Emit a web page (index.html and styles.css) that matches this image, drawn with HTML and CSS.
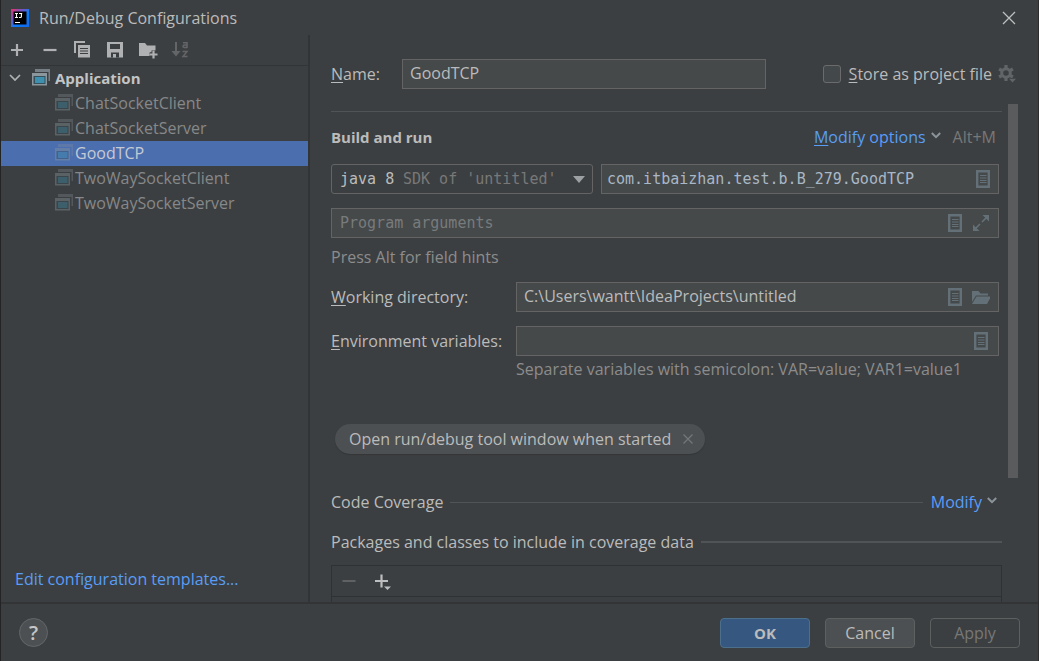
FILE: index.html
```html
<!DOCTYPE html>
<html lang="en">
<head>
<meta charset="utf-8">
<title>Run/Debug Configurations</title>
<link rel="stylesheet" href="styles.css">
</head>
<body>
<svg class="defs" aria-hidden="true">
  <symbol id="app" viewBox="0 0 18 17">
    <path d="M3 0h15v12h-1.500V3H3z" fill="#8b969d" opacity=".75"/>
    <path d="M0 4h15v12.500H0z" fill="#8b969d"/>
    <path d="M1.500 7h12v8h-12z" fill="#35505b"/>
    <path d="M3 8h9.500v6H3z" fill="#3f8fae"/>
  </symbol>
  <symbol id="doc" viewBox="0 0 14 18">
    <path d="M1.200 1.200h11.600v15.600H1.200z" fill="none" stroke="currentColor" stroke-width="2.400"/>
    <path d="M4 5.500h6.500M4 8h6.500M4 10.500h6.500M4 12.500h6.500" stroke="currentColor" stroke-width="1.200"/>
  </symbol>
  <symbol id="chevron" viewBox="0 0 10 7">
    <path d="M.8 1 5 5.200 9.200 1" fill="none" stroke="#8a949a" stroke-width="2"/>
  </symbol>
</svg>
<div class="dialog">
  <header class="titlebar">
    <svg class="logo" width="18" height="18" viewBox="0 0 18 18" aria-hidden="true">
      <defs><linearGradient id="g" x1="0" y1="0" x2="1" y2="1"><stop offset="0" stop-color="#f0306a"/><stop offset=".35" stop-color="#6a57c8"/><stop offset=".6" stop-color="#087cfa"/><stop offset="1" stop-color="#1668e8"/></linearGradient></defs>
      <path d="M0 0h18v18H0z" fill="url(#g)"/><path d="M2.500 2.500h13v13h-13z"/>
      <path d="M4 4.500h3M5.500 4.500v4M4 8.500h3M8 4.500h3.200M10.400 4.500v3q0 1-1 1H8M4 13.500h5" fill="none" stroke="#fff" stroke-width="1.100"/>
    </svg>
    <h1>Run/Debug Configurations</h1>
    <button class="close" aria-label="Close"><svg width="14" height="14" viewBox="0 0 14 14"><path d="m1 1 12 12M13 1 1 13" stroke="#bdbfc0" stroke-width="1.300"/></svg></button>
  </header>
  <div class="body">
    <aside class="sidebar">
      <div class="toolbar">
        <button aria-label="Add"><svg viewBox="0 0 18 18"><path d="M9 3v12M3 9h12" stroke="#afb1b3" stroke-width="2.200"/></svg></button>
        <button aria-label="Remove"><svg viewBox="0 0 18 18"><path d="M2.500 9h13" stroke="#afb1b3" stroke-width="2.200"/></svg></button>
        <button aria-label="Copy"><svg viewBox="0 0 18 18"><path d="M0 0h11v2H2v10H0z" fill="#afb1b3"/><path d="M4 4h12v12.500H4z" fill="#afb1b3"/><path d="M6 7.500h8M6 10h8M6 12.500h8" stroke="#3c3f41" stroke-width="1.100"/></svg></button>
        <button aria-label="Save"><svg viewBox="0 0 18 18"><path d="M0 1h16v15.500H0z" fill="#afb1b3"/><path d="M3 3h10v5H3zM4 11.500h8v5H4z" fill="#3c3f41"/><path d="M6 13h3v3.500H6z" fill="#afb1b3"/></svg></button>
        <button aria-label="New folder"><svg viewBox="0 0 18 18"><path d="M-1 2h6l2 2.500h8.500V9.500H12v2h-2V15H-1z" fill="#afb1b3"/><path d="M13.500 9.500v8M9.500 13.500h8" stroke="#3c3f41" stroke-width="4"/><path d="M13.500 9.500v8M9.500 13.500h8" stroke="#afb1b3" stroke-width="2.200"/></svg></button>
        <button aria-label="Sort" disabled><svg viewBox="0 0 18 18"><path d="M3 1v12" stroke="#636567" stroke-width="2"/><path d="M-1.500 10h9L3 15.500z" fill="#636567"/><path d="M10 1.800h4v5.200M14 4h-2.500q-1.500 0-1.500 1.200T11.500 6.500H14M9.500 10.500H14L10 15.500h4.500" fill="none" stroke="#636567" stroke-width="1.500"/></svg></button>
      </div>
      <ul class="tree" role="tree">
        <li class="row root" role="treeitem" aria-expanded="true"><svg class="arrow" width="12" height="8" viewBox="0 0 12 8"><path d="m1 1 5 5 5-5" fill="none" stroke="#afb1b3" stroke-width="1.700"/></svg><svg class="app"><use href="#app"/></svg>Application</li>
        <li class="row" role="treeitem"><svg class="app"><use href="#app"/></svg>ChatSocketClient</li>
        <li class="row" role="treeitem"><svg class="app"><use href="#app"/></svg>ChatSocketServer</li>
        <li class="row selected" role="treeitem" aria-selected="true"><svg class="app"><use href="#app"/></svg>GoodTCP</li>
        <li class="row" role="treeitem"><svg class="app"><use href="#app"/></svg>TwoWaySocketClient</li>
        <li class="row" role="treeitem"><svg class="app"><use href="#app"/></svg>TwoWaySocketServer</li>
      </ul>
      <a class="link templates" href="#">Edit configuration templates...</a>
    </aside>
    <main class="main">
      <div class="namerow">
        <label class="namelabel" for="name"><u>N</u>ame:</label>
        <div class="field namefield"><input id="name" value="GoodTCP"></div>
        <input class="check" type="checkbox" id="store"><label for="store"><u>S</u>tore as project file</label>
        <button class="gear" aria-label="Storage settings"><svg width="18" height="18" viewBox="0 0 18 18"><circle cx="8" cy="8" r="4.300" fill="none" stroke="#626567" stroke-width="3"/><path d="M8 0v3.500M8 12.500V16M1.100 4l3 1.700M11.900 10.300l3 1.700M1.100 12l3-1.700M11.900 5.700l3-1.700" stroke="#626567" stroke-width="3.200"/><path d="M10 13h8v4h-8z" fill="#3c3f41"/><path d="M11 13.800h7L14.500 17.500z" fill="#626567"/></svg></button>
      </div>
      <div class="pane">
        <div class="content">
          <hr class="divider">
          <div class="heading">
            <h2>Build and run</h2>
            <a class="link" href="#"><u>M</u>odify options</a><svg class="chev"><use href="#chevron"/></svg><span class="shortcut">Alt+M</span>
          </div>
          <div class="runrow">
            <div class="sdk">
              <select id="sdk" aria-label="Java SDK"><option>java 8</option></select>
              <span class="sdkhint">SDK of 'untitled'</span>
              <svg class="caret" width="12" height="7" viewBox="0 0 12 7"><path d="M0 0h12L6 7z" fill="#9da0a2"/></svg>
            </div>
            <div class="field mono grow"><input id="main" aria-label="Main class" value="com.itbaizhan.test.b.B_279.GoodTCP"><button aria-label="Browse classes"><svg class="doc"><use href="#doc"/></svg></button></div>
          </div>
          <div class="field mono args"><input id="args" aria-label="Program arguments" placeholder="Program arguments"><button aria-label="Insert macro"><svg class="doc"><use href="#doc"/></svg></button><button aria-label="Expand"><svg class="wide" viewBox="0 0 18 18"><path d="M10.500 1H17v6.500zM1 10.500V17h6.500z" fill="currentColor"/><path d="m10 8 5-5M8 10l-5 5" stroke="currentColor" stroke-width="1.700"/></svg></button></div>
          <p class="hint">Press Alt for field hints</p>
          <div class="form">
            <label for="wd"><u>W</u>orking directory:</label>
            <div class="field"><input id="wd" value="C:\Users\wantt\IdeaProjects\untitled"><button aria-label="Insert macro"><svg class="doc"><use href="#doc"/></svg></button><button aria-label="Browse folders"><svg class="wide" viewBox="0 0 18 18"><path d="M0 3h6.500l2 2.500H16v2H4L0 14z" fill="currentColor"/><path d="M4.500 8.500H19L15 16H0z" fill="currentColor"/></svg></button></div>
            <label for="env"><u>E</u>nvironment variables:</label>
            <div class="field"><input id="env"><button aria-label="Edit variables"><svg class="doc"><use href="#doc"/></svg></button></div>
            <p class="hint envhint">Separate variables with semicolon: VAR=value; VAR1=value1</p>
          </div>
          <div class="chip">Open run/debug tool window when started<button aria-label="Remove option"><svg width="10" height="10" viewBox="0 0 10 10"><path d="m.5.5 9 9M9.500.5l-9 9" stroke="#737678" stroke-width="1.300"/></svg></button></div>
          <div class="section coverage"><h3>Code Coverage</h3><hr><a class="link" href="#">Modify</a><svg class="chev"><use href="#chevron"/></svg></div>
          <div class="section"><h3>Packages and classes to include in coverage data</h3><hr class="thick"></div>
          <div class="list">
            <div class="listbar">
              <button aria-label="Remove class" disabled><svg viewBox="0 0 18 18"><path d="M2.500 9h13" stroke="#5f6163" stroke-width="2"/></svg></button>
              <button aria-label="Add class"><svg viewBox="0 0 18 18"><path d="M7.500 2.500v13M1 9h13" stroke="#bcbec0" stroke-width="2.200"/><path d="M10 14.500h7L13.500 18z" fill="#bcbec0"/></svg></button>
            </div>
          </div>
        </div>
        <div class="scrollbar"><div class="thumb"></div></div>
      </div>
    </main>
  </div>
  <footer class="footer">
    <button class="help" aria-label="Help">?</button>
    <button class="btn primary">OK</button>
    <button class="btn">Cancel</button>
    <button class="btn" disabled>Apply</button>
  </footer>
</div>
</body>
</html>
```
FILE: styles.css
```css
* { box-sizing: border-box; }
body {
  margin: 0;
  background: #3c3f41;
  color: #bbbbbb;
  font: 16px/20px "Open Sans", "Noto Sans", sans-serif;
}
button, input, select { font: inherit; color: inherit; margin: 0; padding: 0; }
button { background: none; border: 0; display: flex; align-items: center; justify-content: center; }
h1, h2, h3, p, ul { margin: 0; padding: 0; font-size: inherit; font-weight: 400; }
hr { margin: 0; border: 0; height: 1px; background: #515456; }
u { text-underline-offset: 2px; text-decoration-thickness: 1px; }
svg { display: block; flex: none; }
.defs { position: absolute; width: 0; height: 0; }
.link { color: #589df6; text-decoration: none; }

.dialog {
  height: 100vh;
  display: flex;
  flex-direction: column;
  border-left: 1px solid #222425;
  border-right: 1px solid #2b2d2e;
}
.titlebar { display: flex; align-items: center; height: 35px; padding: 1px 22px 0 10px; }
.titlebar h1 { margin-left: 10px; flex: 1; }
.body { flex: 1; display: flex; min-height: 0; }

.sidebar { width: 309px; flex: none; display: flex; flex-direction: column; border-right: 2px solid #323435; }
.toolbar { display: flex; gap: 15px; height: 31px; padding: 0 7px; border-bottom: 1px solid #323435; }
.toolbar svg, .listbar svg { width: 18px; height: 18px; overflow: visible; }
.tree { list-style: none; flex: 1; }
.row { display: flex; align-items: center; height: 25px; padding: 0 0 2px 54px; gap: 2px; color: #868889; }
.row.root { padding-left: 8px; color: #c2c4c5; font-size: 15px; font-weight: 700; }
.arrow { margin-right: 9px; }
.root .app { margin-right: 3px; opacity: 1; }
.app { width: 18px; height: 17px; opacity: .4; }
.selected { background: #4b6eaf; color: #c5cad4; }
.templates { margin: 0 14px 13px; }

.main { flex: 1; min-width: 0; display: flex; flex-direction: column; padding-left: 21px; }
.namerow { display: flex; align-items: center; padding: 24px 22px 15px 0; }
.namelabel { width: 71px; }
.namefield { flex: 1; }
.field {
  display: flex;
  align-items: center;
  height: 30px;
  min-width: 0;
  padding: 0 8px 0 7px;
  gap: 8px;
  background: #45494a;
  border: 1px solid #646464;
  color: #637077;
}
.field input { flex: 1; min-width: 0; border: 0; outline: 0; padding-bottom: 2px; background: none; color: #bbbbbb; }
.field button { width: 18px; height: 18px; }
.doc { width: 14px; height: 18px; }
.wide { width: 18px; height: 18px; }
.mono { font-family: "DejaVu Sans Mono", monospace; font-size: 15px; }
.field.mono input { color: #a9b7c6; padding-bottom: 0; }
.field input::placeholder { color: #787b7c; opacity: 1; }
.check { appearance: none; width: 18px; height: 18px; margin: 0 8px 0 57px; background: #43494a; border: 1px solid #6b6b6b; border-radius: 3px; }
.gear { margin-left: 6px; }

.pane { flex: 1; min-height: 0; display: flex; overflow: hidden; }
.content { flex: 1; min-width: 0; padding-top: 7px; }
.scrollbar { margin: 0 20px 0 6px; width: 10px; }
.thumb { height: 75%; background: #595b5d; }
.divider { margin-bottom: 15px; }
.heading { display: flex; align-items: center; padding-right: 6px; }
.heading h2 { font-size: 15px; font-weight: 700; flex: 1; }
.chev { width: 10px; height: 7px; margin: 0 0 3px 5px; }
.shortcut { margin-left: 12px; color: #787878; }
.runrow { display: flex; gap: 8px; margin: 17px 3px 14px 0; }
.sdk { position: relative; width: 262px; font-family: "DejaVu Sans Mono", monospace; font-size: 15px; }
.sdk select {
  appearance: none;
  width: 100%;
  height: 30px;
  padding: 0 30px 0 8px;
  background: #3c3f41;
  border: 1px solid #646464;
  border-radius: 3px;
}
.sdkhint { position: absolute; left: 72px; top: 5px; color: #787878; pointer-events: none; }
.caret { position: absolute; right: 8px; top: 12px; pointer-events: none; }
.grow { flex: 1; }
.runrow .field { padding-left: 5px; padding-right: 6px; }
.args { margin-right: 3px; padding-left: 8px; }
.hint { color: #8c8c8c; }
.args + .hint { margin: 9px 0 15px; }
.form { display: grid; grid-template-columns: 185px 1fr; align-items: center; row-gap: 14px; margin-right: 3px; }
.envhint { grid-column: 2; margin-top: -11px; }
.chip {
  display: flex;
  align-items: center;
  gap: 12px;
  width: fit-content;
  height: 30px;
  margin: 45px 0 38px 4px;
  padding: 0 12px 0 14px;
  border-radius: 15px;
  background: #4c5052;
  box-shadow: 0 1px 1px #333638;
}
.section { display: flex; align-items: center; margin-bottom: 13px; }
.section hr { flex: 1; margin-left: 7px; }
.section .thick { height: 2px; }
.coverage { margin-bottom: 20px; padding-right: 5px; }
.coverage .link { margin-left: 8px; }
.list { border: 1px solid #2f3132; height: 80px; }
.listbar { display: flex; gap: 16px; height: 31px; padding: 0 8px; border-bottom: 1px solid #2f3132; }

.footer { display: flex; align-items: center; gap: 15px; height: 59px; padding: 0 18px; border-top: 2px solid #323435; }
.help { width: 29px; height: 29px; margin-right: auto; border: 1px solid #63676a; border-radius: 50%; background: #4c5052; color: #c4c6c8; font-size: 20px; font-weight: 600; }
.btn { width: 90px; height: 30px; border: 1px solid #5e6060; border-radius: 4px; background: #4c5052; }
.btn.primary { background: #365880; border-color: #4c708c; font-size: 15px; font-weight: 700; }
.btn:disabled { background: none; color: #777777; }
```
